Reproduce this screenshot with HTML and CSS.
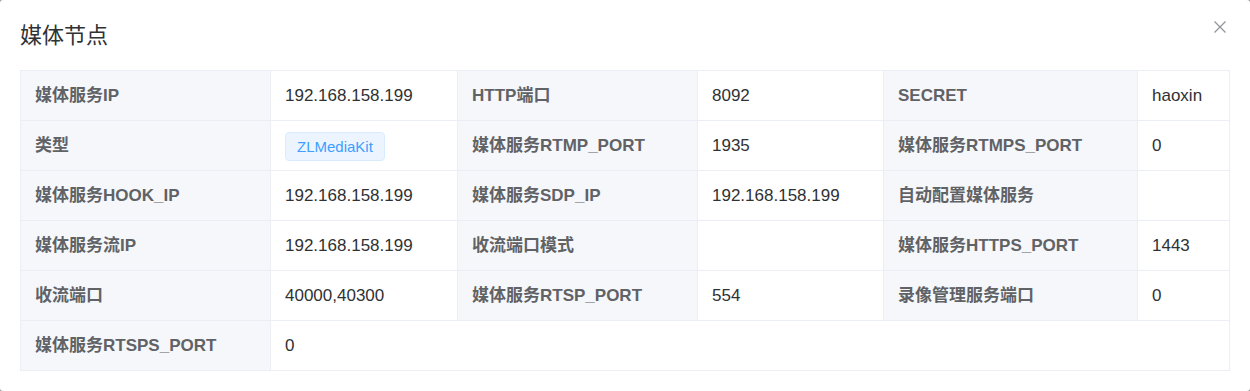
FILE: index.html
```html
<!DOCTYPE html>
<html lang="zh">
<head>
    <meta charset="UTF-8">
    <meta name="viewport" content="width=device-width, initial-scale=1.0">
    <title>媒体节点</title>
    <link rel="stylesheet" href="styles.css">
</head>
<body>

    <div class="dialogo">
        <div class="cabecalho">
            <span class="titulo">媒体节点</span>
            <button class="fechar" aria-label="关闭">
                <svg width="14" height="14" viewBox="0 0 14 14">
                    <path d="M1.5 1.5 L12.5 12.5 M12.5 1.5 L1.5 12.5" stroke="#909399" stroke-width="1.2" fill="none"/>
                </svg>
            </button>
        </div>

        <div class="detalhes">
            <div class="rotulo">媒体服务IP</div>
            <div class="valor">192.168.158.199</div>
            <div class="rotulo">HTTP端口</div>
            <div class="valor">8092</div>
            <div class="rotulo">SECRET</div>
            <div class="valor">haoxin</div>

            <div class="rotulo">类型</div>
            <div class="valor"><span class="etiqueta">ZLMediaKit</span></div>
            <div class="rotulo">媒体服务RTMP_PORT</div>
            <div class="valor">1935</div>
            <div class="rotulo">媒体服务RTMPS_PORT</div>
            <div class="valor">0</div>

            <div class="rotulo">媒体服务HOOK_IP</div>
            <div class="valor">192.168.158.199</div>
            <div class="rotulo">媒体服务SDP_IP</div>
            <div class="valor">192.168.158.199</div>
            <div class="rotulo">自动配置媒体服务</div>
            <div class="valor"></div>

            <div class="rotulo">媒体服务流IP</div>
            <div class="valor">192.168.158.199</div>
            <div class="rotulo">收流端口模式</div>
            <div class="valor"></div>
            <div class="rotulo">媒体服务HTTPS_PORT</div>
            <div class="valor">1443</div>

            <div class="rotulo">收流端口</div>
            <div class="valor">40000,40300</div>
            <div class="rotulo">媒体服务RTSP_PORT</div>
            <div class="valor">554</div>
            <div class="rotulo">录像管理服务端口</div>
            <div class="valor">0</div>

            <div class="rotulo">媒体服务RTSPS_PORT</div>
            <div class="valor largo">0</div>
        </div>
    </div>

</body>
</html>
```

FILE: styles.css
```css
* {
    margin: 0;
    padding: 0;
    box-sizing: border-box;
    font-family: "Liberation Sans", "Noto Sans CJK SC", sans-serif;
}

body {
    background: #9a9a9a;
    width: 1250px;
    height: 391px;
    overflow: hidden;
}

.dialogo {
    background: #fff;
    border-radius: 3px;
    height: 391px;
    padding: 0 20px;
}

.cabecalho {
    display: flex;
    justify-content: space-between;
    align-items: flex-start;
    padding: 21px 3px 19px 0;
}

.titulo {
    font-size: 22px;
    line-height: 30px;
    color: #303133;
}

.fechar {
    border: none;
    background: none;
    width: 14px;
    height: 14px;
    margin-top: -1px;
    cursor: pointer;
    display: flex;
}

.detalhes {
    display: grid;
    grid-template-columns: 249px 186px 239px 185px 253px 1fr;
    grid-auto-rows: 49px;
    gap: 1px;
    padding: 1px;
    background: #ebeef5;
    font-size: 17px;
    line-height: 24px;
}

.rotulo,
.valor {
    display: flex;
    align-items: center;
    padding: 1px 14px 0;
    white-space: nowrap;
}

.rotulo {
    background: #f5f7fa;
    color: #606266;
    font-weight: bold;
}

.valor {
    background: #fff;
    color: #303133;
}

.valor.largo {
    grid-column: span 5;
}

.etiqueta {
    display: inline-block;
    height: 29px;
    line-height: 27px;
    padding: 0 11px;
    font-size: 15px;
    color: #409eff;
    background: #ecf5ff;
    border: 1px solid #d9ecff;
    border-radius: 4px;
}
```
